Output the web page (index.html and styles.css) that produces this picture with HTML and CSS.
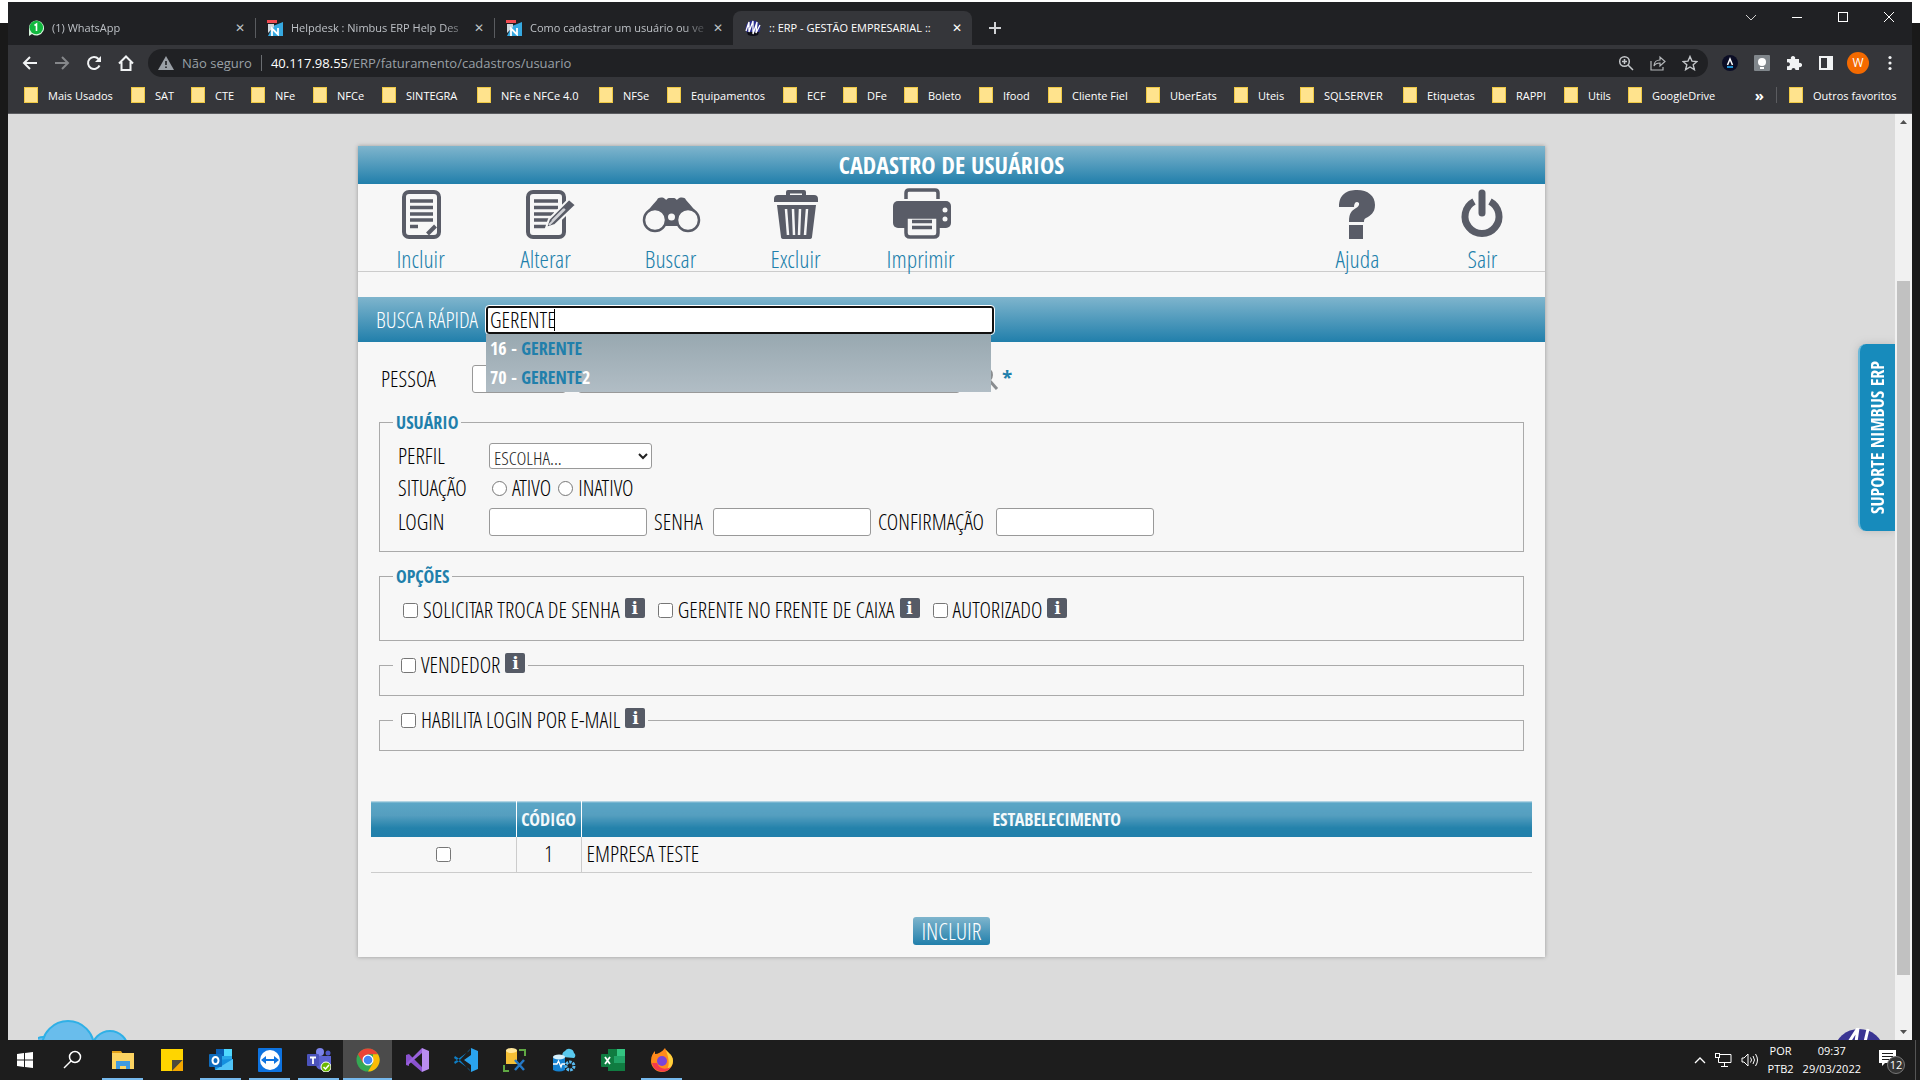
FILE: index.html
```html
<!DOCTYPE html>
<html lang="pt-BR">
<head>
<meta charset="utf-8">
<title>:: ERP - GESTÃO EMPRESARIAL ::</title>
<link rel="stylesheet" href="styles.css">
</head>
<body>
<div class="desktop">
<div class="window">
  <header class="tabbar">
    <div class="tab tab-first">
      <svg class="favicon" width="16" height="16" viewBox="0 0 16 16"><path d="M1 16V8a7.500 7.500 0 1 1 3 6z" fill="#d8f5de"/><circle cx="8.300" cy="7.500" r="6.800" fill="#12b83f"/><path d="M6.500 5.500l2-1.500v7" fill="none" stroke="#fff" stroke-width="1.600"/></svg>
      <span class="tab-title">(1) WhatsApp</span><button class="tab-close" aria-label="Fechar">✕</button>
    </div>
    <div class="tab">
      <svg class="favicon" width="16" height="16" viewBox="0 0 16 16"><path d="M1 16L6 6l10-4v14z" fill="#36a9e1"/><rect x="0" y="0" width="10" height="3" fill="#f04a50"/><path d="M1 4h6v3L1 13z" fill="#cfd8dd"/><path d="M5 16V8.500l6 6V8" fill="none" stroke="#fff" stroke-width="1.800"/></svg>
      <span class="tab-title">Helpdesk : Nimbus ERP Help Des</span><button class="tab-close" aria-label="Fechar">✕</button>
    </div>
    <div class="tab">
      <svg class="favicon" width="16" height="16" viewBox="0 0 16 16"><path d="M1 16L6 6l10-4v14z" fill="#36a9e1"/><rect x="0" y="0" width="10" height="3" fill="#f04a50"/><path d="M1 4h6v3L1 13z" fill="#cfd8dd"/><path d="M5 16V8.500l6 6V8" fill="none" stroke="#fff" stroke-width="1.800"/></svg>
      <span class="tab-title">Como cadastrar um usuário ou ve</span><button class="tab-close" aria-label="Fechar">✕</button>
    </div>
    <div class="tab tab-active">
      <svg class="favicon" width="16" height="16" viewBox="0 0 16 16"><circle cx="8" cy="8" r="7.500" fill="#2d2f8e"/><path d="M3 15q5 2 10 0l1-3H2z" fill="#0c0c16"/><path d="M1 11L4 2v10l4-11v13l4-12-1 11 4-8" fill="none" stroke="#fff" stroke-width="1.300"/></svg>
      <span class="tab-title">:: ERP - GESTÃO EMPRESARIAL ::</span><button class="tab-close" aria-label="Fechar">✕</button>
    </div>
    <button class="new-tab" aria-label="Nova guia"><svg width="14" height="14" viewBox="0 0 14 14"><path d="M7 1v12M1 7h12" stroke="#d0d2d5" stroke-width="2"/></svg></button>
    <div class="win-controls">
      <svg width="12" height="12" viewBox="0 0 12 12"><path d="M1 4l5 5 5-5" fill="none" stroke="#d0d0d0"/></svg>
      <svg width="12" height="12" viewBox="0 0 12 12"><path d="M1 6.500h10" stroke="#fff"/></svg>
      <svg width="12" height="12" viewBox="0 0 12 12"><rect x="1.500" y="1.500" width="9" height="9" fill="none" stroke="#fff"/></svg>
      <svg width="12" height="12" viewBox="0 0 12 12"><path d="M1 1l10 10M11 1L1 11" stroke="#fff"/></svg>
    </div>
  </header>

  <div class="navbar">
    <div class="nav-buttons">
      <svg width="16" height="16" viewBox="0 0 16 16"><path d="M15 8H2M8 2L2 8l6 6" fill="none" stroke="#f1f3f4" stroke-width="2"/></svg>
      <svg width="16" height="16" viewBox="0 0 16 16"><path d="M1 8h13M8 2l6 6-6 6" fill="none" stroke="#85878a" stroke-width="2"/></svg>
      <svg width="16" height="16" viewBox="0 0 16 16"><path d="M13.500 10.500A6 6 0 1 1 12.500 4" fill="none" stroke="#f1f3f4" stroke-width="2"/><path d="M15 1v6H9z" fill="#f1f3f4"/></svg>
      <svg width="16" height="16" viewBox="0 0 16 16"><path d="M1 8.500L8 1.500l7 7M3.500 7v8h9V7" fill="none" stroke="#f1f3f4" stroke-width="2"/></svg>
    </div>
    <div class="omnibox">
      <svg width="16" height="14" viewBox="0 0 16 14"><path d="M8 0l8 14H0z" fill="#9aa0a6"/><path d="M8 5v4M8 10.500v1.500" stroke="#202124" stroke-width="1.600"/></svg>
      <span class="insecure">Não seguro</span>
      <span class="url"><b>40.117.98.55</b>/ERP/faturamento/cadastros/usuario</span>
      <span class="omni-icons">
        <svg width="16" height="16" viewBox="0 0 16 16"><circle cx="6.500" cy="6.500" r="4.800" fill="none" stroke="#c4c7ca" stroke-width="1.500"/><path d="M10 10l5 5M4 6.500h5M6.500 4v5" stroke="#c4c7ca" stroke-width="1.500"/></svg>
        <svg width="16" height="16" viewBox="0 0 16 16"><path d="M1 6v9h12v-3M4 11c0-4 3-6 6-6V2l5 4.500L10 11V8C7 8 5 9 4 11z" fill="none" stroke="#b4b7ba" stroke-width="1.200"/></svg>
        <svg width="16" height="16" viewBox="0 0 16 16"><path d="M8 1.500l2 4.600 5 .4-3.800 3.300 1.200 4.900L8 12l-4.400 2.700 1.200-4.900L1 6.500l5-.4z" fill="none" stroke="#c4c7ca" stroke-width="1.400"/></svg>
      </span>
    </div>
    <div class="extensions">
      <svg width="16" height="16" viewBox="0 0 16 16"><circle cx="8" cy="8" r="8" fill="#0b0d25"/><path d="M5.500 10L8 4l2.500 6" fill="none" stroke="#fff" stroke-width="1.500"/><path d="M5 12h6" stroke="#1f8fd0" stroke-width="2"/></svg>
      <svg width="16" height="16" viewBox="0 0 16 16"><rect width="16" height="16" rx="1" fill="#80868b"/><circle cx="8" cy="7" r="4" fill="#fff"/><rect x="6" y="12" width="4" height="2" fill="#fff"/></svg>
      <svg width="16" height="16" viewBox="0 0 16 16"><path d="M1 4h4a2.200 2.200 0 1 1 4 0h4v4a2.200 2.200 0 1 1 0 4v3H9.500a2 2 0 1 0-4 0H1v-4a2 2 0 1 0 0-3.500z" fill="#f1f3f4"/></svg>
      <svg width="16" height="16" viewBox="0 0 16 16"><rect x="2" y="2" width="12" height="12" fill="none" stroke="#f1f3f4" stroke-width="2"/><path d="M9 2h5v12H9z" fill="#f1f3f4"/></svg>
      <span class="avatar">W</span>
      <svg width="16" height="16" viewBox="0 0 16 16"><circle cx="8" cy="2.500" r="1.600" fill="#f1f3f4"/><circle cx="8" cy="8" r="1.600" fill="#f1f3f4"/><circle cx="8" cy="13.500" r="1.600" fill="#f1f3f4"/></svg>
    </div>
  </div>

  <nav class="bookmarks">
    <a href="#">Mais Usados</a><a href="#">SAT</a><a href="#">CTE</a><a href="#">NFe</a><a href="#">NFCe</a><a href="#">SINTEGRA</a><a href="#">NFe e NFCe 4.0</a><a href="#">NFSe</a><a href="#">Equipamentos</a><a href="#">ECF</a><a href="#">DFe</a><a href="#">Boleto</a><a href="#">Ifood</a><a href="#">Cliente Fiel</a><a href="#">UberEats</a><a href="#">Uteis</a><a href="#">SQLSERVER</a><a href="#">Etiquetas</a><a href="#">RAPPI</a><a href="#">Utils</a><a href="#">GoogleDrive</a><span class="more">»</span><a class="others" href="#">Outros favoritos</a>
  </nav>

  <div class="viewport">
    <main class="page">
      <section class="card">
        <h1 class="card-title">CADASTRO DE USUÁRIOS</h1>
        <div class="actions">
          <button class="action">
            <svg width="60" height="60" viewBox="0 0 60 60"><rect x="13" y="8" width="35" height="45" rx="5" fill="none" stroke="#595c67" stroke-width="4"/><path d="M19 17h23M19 23.500h23M19 30h23M19 36h23M19 42.500h8" stroke="#595c67" stroke-width="3.400"/><path d="M36.500 50l8-8" stroke="#595c67" stroke-width="4"/></svg>Incluir
          </button>
          <button class="action">
            <svg width="60" height="60" viewBox="0 0 60 60"><rect x="12" y="8" width="36" height="45" rx="5" fill="none" stroke="#595c67" stroke-width="4"/><path d="M18 17h24M18 23.500h24M18 30h20M18 36h16M18 42.500h12" stroke="#595c67" stroke-width="3.400"/><path d="M30 44l3-9 20-20 7 6-21 20z" fill="#595c67" stroke="#f7f7f7" stroke-width="2"/><path d="M33 41l16-16M36 37l12-12" stroke="#d0d1d6" stroke-width="2"/></svg>Alterar
          </button>
          <button class="action">
            <svg width="60" height="60" viewBox="0 0 60 60"><path d="M3 33c3-7 10-13 13-17 1-3 6-3 8-1 2 2 2-1 4-1h5c2 0 2 3 4 1 2-2 7-2 8 1 3 4 10 10 13 17L44 42H18z" fill="#595c67"/><circle cx="14" cy="36" r="11" fill="#f7f7f7" stroke="#595c67" stroke-width="2.500"/><circle cx="47" cy="36" r="11" fill="#f7f7f7" stroke="#595c67" stroke-width="2.500"/><path d="M25 42h11l-1 4h-9z" fill="#f7f7f7"/><circle cx="30.500" cy="33" r="3.500" fill="#f7f7f7"/></svg>Buscar
          </button>
          <button class="action">
            <svg width="60" height="60" viewBox="0 0 60 60"><path d="M8 18v-3q0-4 4-4h8V8q0-2 2-2h16q2 0 2 2v3h8q4 0 4 4v3zM24 11h12V9.500H24z" fill="#595c67" fill-rule="evenodd"/><path d="M11 21h39l-4 32q0 2-3 2H18q-3 0-3-2z" fill="#595c67"/><path d="M20 25l2 26M27 25l1 26M34 25l-1 26M41 25l-2 26" stroke="#f7f7f7" stroke-width="2.500"/></svg>Excluir
          </button>
          <button class="action">
            <svg width="60" height="60" viewBox="0 0 60 60"><path d="M15 15V9q0-3 3-3h26q3 0 3 3v6" fill="none" stroke="#595c67" stroke-width="3.500"/><rect x="2" y="17" width="58" height="27" rx="5" fill="#595c67"/><path d="M15 33h32v16q0 4-4 4H19q-4 0-4-4z" fill="#f7f7f7" stroke="#595c67" stroke-width="3.500"/><path d="M21 37.500h20M21 43.500h20" stroke="#595c67" stroke-width="3.500"/><circle cx="54" cy="26" r="2.500" fill="#f7f7f7"/><circle cx="54" cy="35" r="2.500" fill="#f7f7f7"/></svg>Imprimir
          </button>
          <button class="action action-right">
            <svg width="60" height="60" viewBox="0 0 60 60"><path d="M12 23C12 10 20 6 30 6c11 0 18 6 18 15 0 8-5 11-9 13-2 1-2 2-2 4H22c0-10 3-11 7-14 4-2 4-6 1-6-2 0-3 2-3 5z" fill="#595c67"/><rect x="22" y="41" width="14" height="14" fill="#595c67"/></svg>Ajuda
          </button>
          <button class="action">
            <svg width="60" height="60" viewBox="0 0 60 60"><path d="M22 17.500A17 17 0 1 0 38 17.500" fill="none" stroke="#595c67" stroke-width="7"/><path d="M30 9v20" stroke="#595c67" stroke-width="7" stroke-linecap="round"/></svg>Sair
          </button>
        </div>

        <div class="quick">
          <label for="busca">BUSCA RÁPIDA</label>
          <div class="quick-field">
            <input id="busca" type="text" value="GERENTE">
            <span class="caret"></span>
            <ul class="suggest">
              <li>16 - <b>GERENTE</b></li>
              <li>70 - <b>GERENTE</b>2</li>
            </ul>
          </div>
        </div>

        <div class="person">
          <label for="pessoa">PESSOA</label>
          <input id="pessoa" class="person-code" type="text">
          <input class="person-name" type="text" aria-label="Nome">
          <svg width="28" height="28" viewBox="0 0 28 28"><circle cx="12" cy="10" r="8" fill="none" stroke="#8a8d90" stroke-width="2"/><path d="M17 15l8 9" stroke="#8a8d90" stroke-width="3"/></svg>
          <span class="required">*</span>
        </div>

        <fieldset>
          <legend class="strong">USUÁRIO</legend>
          <div class="row">
            <label class="first" for="perfil">PERFIL</label>
            <select id="perfil"><option>ESCOLHA...</option></select>
          </div>
          <div class="row row-tall">
            <span class="first">SITUAÇÃO</span>
            <input class="radio" type="radio" name="situacao" id="ativo"><label for="ativo">ATIVO</label>
            <input class="radio" type="radio" name="situacao" id="inativo"><label for="inativo">INATIVO</label>
          </div>
          <div class="row row-tall">
            <label class="first" for="login">LOGIN</label><input class="text" id="login" type="text">
            <label class="senha" for="senha">SENHA</label><input class="text" id="senha" type="password">
            <label class="confirm" for="conf">CONFIRMAÇÃO</label><input class="text" id="conf" type="password">
          </div>
        </fieldset>

        <fieldset>
          <legend class="strong">OPÇÕES</legend>
          <div class="row options">
            <span class="check"><input type="checkbox" id="troca"><label for="troca">SOLICITAR TROCA DE SENHA</label><span class="info">i</span></span>
            <span class="check"><input type="checkbox" id="frente"><label for="frente">GERENTE NO FRENTE DE CAIXA</label><span class="info">i</span></span>
            <span class="check"><input type="checkbox" id="aut"><label for="aut">AUTORIZADO</label><span class="info">i</span></span>
          </div>
        </fieldset>

        <fieldset class="short">
          <legend><span class="check"><input type="checkbox" id="vend"><label for="vend">VENDEDOR</label><span class="info">i</span></span></legend>
        </fieldset>

        <fieldset class="short">
          <legend><span class="check"><input type="checkbox" id="mail"><label for="mail">HABILITA LOGIN POR E-MAIL</label><span class="info">i</span></span></legend>
        </fieldset>

        <table class="companies">
          <thead><tr><th class="col-check"></th><th class="col-code">CÓDIGO</th><th>ESTABELECIMENTO</th></tr></thead>
          <tbody><tr><td class="center"><input type="checkbox" aria-label="EMPRESA TESTE"></td><td class="center">1</td><td>EMPRESA TESTE</td></tr></tbody>
        </table>

        <button class="submit">INCLUIR</button>
      </section>

      <a class="support" href="#">SUPORTE NIMBUS ERP</a>
      <svg class="cloud" width="100" height="20" viewBox="0 0 100 20"><g fill="#69bdec" stroke="#2fb0e6" stroke-width="2"><circle cx="5" cy="30" r="13"/><circle cx="72" cy="29" r="18"/><circle cx="30" cy="27" r="26"/></g></svg>
      <svg class="brand" width="44" height="12" viewBox="0 0 44 12"><ellipse cx="22" cy="22" rx="24" ry="21" fill="#3a3593"/><path d="M12 14L21 0l-2 14M28 14L31 1" fill="none" stroke="#fff" stroke-width="3"/></svg>
    </main>
    <div class="scrollbar">
      <svg width="17" height="17" viewBox="0 0 17 17"><path d="M5 10l3.500-4 3.500 4z" fill="#505050"/></svg>
      <span class="thumb"></span>
      <svg width="17" height="17" viewBox="0 0 17 17"><path d="M5 7l3.500 4L12 7z" fill="#505050"/></svg>
    </div>
  </div>
</div>
</div>

<footer class="taskbar">
  <span class="app"><svg width="24" height="24" viewBox="0 0 24 24"><path d="M4 6l7-1v6.500H4zM12 5l8-1v7.500h-8zM4 12.500h7V19l-7-1zM12 12.500h8V20l-8-1z" fill="#fff"/></svg></span>
  <span class="app"><svg width="24" height="24" viewBox="0 0 24 24"><circle cx="13" cy="9" r="5.500" fill="none" stroke="#fff" stroke-width="1.500"/><path d="M9 13l-7 7" stroke="#fff" stroke-width="1.500"/></svg></span>
  <span class="app open"><svg width="24" height="24" viewBox="0 0 24 24"><path d="M1 3h9l2 3H1z" fill="#e3a21a"/><path d="M1 5h22v16H1z" fill="#fcd462"/><path d="M5 21v-8h14v8h-4v-3H9v3z" fill="#3f9be0"/></svg></span>
  <span class="app"><svg width="24" height="24" viewBox="0 0 24 24"><path d="M1 1h22v12L12 23H1z" fill="#ffd500"/><path d="M12 23V12h11z" fill="#4d4a3c"/><path d="M12 23l11-11v11z" fill="#f5a800"/></svg></span>
  <span class="app open"><svg width="24" height="24" viewBox="0 0 24 24"><path d="M7 1h16v13H7z" fill="#28a8ea"/><path d="M7 1h8v7H7z" fill="#0a5fb4"/><path d="M15 1h8v7h-8z" fill="#50d9ff"/><path d="M5 12l19-1v11H6z" fill="#1490df"/><path d="M6 22l18-11v11z" fill="#50c4f7"/><rect y="6" width="13" height="13" rx="1" fill="#0f6cbd"/><ellipse cx="6.500" cy="12.500" rx="3" ry="3.500" fill="none" stroke="#fff" stroke-width="2"/></svg></span>
  <span class="app open"><svg width="24" height="24" viewBox="0 0 24 24"><rect width="24" height="24" rx="1" fill="#0e73e0"/><circle cx="12" cy="12" r="10" fill="#fff"/><path d="M3 12l5-4v3h8V8l5 4-5 4v-3H8v3z" fill="#0e73e0"/></svg></span>
  <span class="app open"><svg width="24" height="24" viewBox="0 0 24 24"><circle cx="13" cy="4" r="4" fill="#7b83eb"/><circle cx="21" cy="5" r="2.500" fill="#5059c9"/><path d="M9 8h15v8a5 5 0 0 1-6 5c-6 2-9-1-9-5z" fill="#5b63d3"/><rect y="6" width="12" height="12" rx="1" fill="#4b53bc"/><path d="M3 9.500h6M6 9.500V16" stroke="#fff" stroke-width="1.800"/><circle cx="19" cy="19" r="5" fill="#6bb700" stroke="#fff"/><path d="M16.500 19l2 2 3.500-4" fill="none" stroke="#fff" stroke-width="1.500"/></svg></span>
  <span class="app open current"><svg width="24" height="24" viewBox="0 0 24 24"><circle cx="12" cy="12" r="11.500" fill="#35a853"/><path d="M2 6.200A11.500 11.500 0 0 1 22 6.200H12L7 15z" fill="#ea4335"/><path d="M22 6.200A11.500 11.500 0 0 1 12 23.500L17 15V6.200z" fill="#fbbc05"/><circle cx="12" cy="12" r="5.500" fill="#fff"/><circle cx="12" cy="12" r="4.300" fill="#4285f4"/></svg></span>
  <span class="app"><svg width="24" height="24" viewBox="0 0 24 24"><path d="M1 7l3-1 13 13v5L3 12l-2 3zM1 17V7l3-1v12z" fill="#8a52cf"/><path d="M3 17l14-12V0L1 16z" fill="#9a62dc"/><path d="M17 0l7 3v18l-7 3z" fill="#b98cf0"/></svg></span>
  <span class="app"><svg width="24" height="24" viewBox="0 0 24 24"><path d="M17 0L4 14 1 16l-1-2L15 3zM17 24L4 10 1 8l-1 2 15 11z" fill="#0e7dc4"/><path d="M17 0l7 3v18l-7 3V17l-7-5 7-5z" fill="#2aa3ee"/></svg></span>
  <span class="app"><svg width="24" height="24" viewBox="0 0 24 24"><path d="M3 2h11v14H3z" fill="#f5bf35"/><ellipse cx="8.500" cy="2.500" rx="5.500" ry="2.500" fill="#ffe69a"/><path d="M16 2h6v6M1 17v6h5" fill="none" stroke="#5fa843" stroke-width="2"/><path d="M12 12l9 10M21 12l-9 10" stroke="#2579c7" stroke-width="2.500"/></svg></span>
  <span class="app"><svg width="24" height="24" viewBox="0 0 24 24"><path d="M11 9a4 4 0 0 1 2-6 5 5 0 0 1 9 2 3 3 0 0 1 0 5z" fill="#59c9ee"/><path d="M1 9h12v13q-6 3-12 0z" fill="#1482d2"/><ellipse cx="7" cy="9" rx="6" ry="2.500" fill="#d7f1fc"/><path d="M1 16h4l1.500-3L9 19l1-3h3" fill="none" stroke="#fff" stroke-width="1.300"/><circle cx="18" cy="18" r="4" fill="none" stroke="#59b9ee" stroke-width="3" stroke-dasharray="2.500 1"/></svg></span>
  <span class="app"><svg width="24" height="24" viewBox="0 0 24 24"><path d="M7 1h17v22H7z" fill="#21a366"/><path d="M7 1h9v7H7zM7 15h17v8H7z" fill="#107c41"/><path d="M16 1h8v7h-8z" fill="#33c481"/><rect y="6" width="13" height="13" rx="1" fill="#107c41"/><path d="M4 9l5 7M9 9l-5 7" stroke="#fff" stroke-width="1.800"/></svg></span>
  <span class="app open"><svg width="24" height="24" viewBox="0 0 24 24"><path d="M15 0c1 4 8 6 8 13a11 11 0 0 1-22 0c0-5 2-8 4-10v3c3 0 7-2 10-6z" fill="#ff8a1c"/><path d="M15 0c1 4 8 6 8 13a11 11 0 0 1-6 9c3-6 2-12-2-22z" fill="#ffd23c"/><path d="M2 15a10.500 10.500 0 0 0 19 4c-6 3-12 2-14-4z" fill="#f43a4e"/><circle cx="12" cy="13" r="5" fill="#7a45d8"/></svg></span>
  <div class="tray">
    <svg width="12" height="8" viewBox="0 0 12 8"><path d="M1 7l5-5 5 5" fill="none" stroke="#fff" stroke-width="1.300"/></svg>
    <svg width="17" height="14" viewBox="0 0 17 14"><path d="M4 1.500h12v8H3.500V5M9.500 9.500v4M6 13.500h7" fill="none" stroke="#fff"/><rect x=".5" y=".5" width="4" height="4" fill="#1d1d1d" stroke="#fff"/></svg>
    <svg width="18" height="14" viewBox="0 0 18 14"><path d="M1 5h2l4-4v12L3 9H1zM9.500 4.500q2 2.500 0 5M12 3q3 4 0 8M14.500 1q4 6 0 12" fill="none" stroke="#fff"/></svg>
    <span class="tray-text">POR<br>PTB2</span>
    <span class="tray-text clock">09:37<br>29/03/2022</span>
    <span class="notes"><svg width="17" height="16" viewBox="0 0 17 16"><path d="M0 0h17v13H6l-3 3v-3H0z" fill="#fff"/><path d="M3 3.500h11M3 6.500h11M3 9.500h7" stroke="#1d1d1d"/></svg><span class="count">12</span></span>
  </div>
</footer>
</body>
</html>
```
FILE: styles.css
```css
* { box-sizing: border-box; }
html, body { height: 100%; }
body {
  margin: 0;
  display: flex;
  flex-direction: column;
  overflow: hidden;
  background: #1d1d1d;
  font: 11px "Open Sans", sans-serif;
}
svg { display: block; flex: none; }
button { border: 0; background: none; padding: 0; font: inherit; color: inherit; }
a { color: inherit; text-decoration: none; }

.desktop {
  flex: 1;
  min-height: 0;
  display: flex;
  padding: 2px 8px 0;
  background: linear-gradient(#fff 23px, #191919 23px);
}
.window { flex: 1; min-width: 0; display: flex; flex-direction: column; color: #fff; }

/* browser chrome */
.tabbar { height: 43px; display: flex; align-items: flex-end; background: #202124; padding-left: 8px; }
.tab {
  width: 239px;
  height: 34px;
  display: flex;
  align-items: center;
  padding: 0 7px 1px 12px;
  color: #bdc1c6;
}
.tab-title {
  flex: 1;
  min-width: 0;
  margin-left: 8px;
  white-space: nowrap;
  mask-image: linear-gradient(90deg, #000 85%, transparent);
}
.tab + .tab:not(.tab-active) { background: linear-gradient(#5a5c60, #5a5c60) 0 7px / 1px 20px no-repeat; }
.tab-active { background: #35363a; border-radius: 8px 8px 0 0; color: #fff; }
.tab-active .tab-title { mask-image: none; }
.tab-close { width: 16px; font-size: 12px; }
.new-tab { height: 34px; padding: 0 16px; }
.win-controls { margin-left: auto; align-self: flex-start; display: flex; gap: 34px; padding: 9px 17px 0 0; }

.navbar { height: 33px; display: flex; align-items: center; background: #35363a; padding-top: 2px; }
.nav-buttons { display: flex; gap: 16px; padding: 0 14px; }
.omnibox {
  flex: 1;
  height: 28px;
  border-radius: 14px;
  background: #202124;
  display: flex;
  align-items: center;
  padding: 0 10px;
  font-size: 13px;
  color: #9aa0a6;
}
.insecure { margin-left: 8px; padding-right: 9px; border-right: 1px solid #6a6d71; line-height: 16px; }
.url { margin-left: 9px; }
.url b { font-weight: 400; color: #fff; }
.omni-icons { margin-left: auto; display: flex; gap: 16px; }
.extensions { display: flex; align-items: center; gap: 16px; padding: 0 14px; }
.avatar { width: 22px; height: 22px; margin: 0 -3px; border-radius: 50%; background: #f46a00; text-align: center; font-size: 12px; line-height: 22px; }

.bookmarks {
  height: 36px;
  display: grid;
  grid-template-columns: 107px 60px 60px 62px 69px 95px 122px 68px 116px 60px 61px 75px 69px 98px 88px 66px 103px 89px 72px 64px 1fr auto 135px;
  align-items: center;
  padding: 0 0 1px 16px;
  background: #35363a;
  border-bottom: 1px solid #5b5c60;
  white-space: nowrap;
}
.bookmarks a::before {
  content: "";
  display: inline-block;
  width: 12px;
  height: 14px;
  margin-right: 10px;
  vertical-align: -3px;
  background: #ffe38d;
  border: 1px solid #efc944;
}
.more { padding-right: 12px; font-size: 15px; font-weight: 700; line-height: 16px; border-right: 1px solid #5b5c60; }
.bookmarks .others { padding-left: 12px; }

/* ERP page */
.viewport { flex: 1; min-height: 0; display: flex; }
.page {
  flex: 1;
  position: relative;
  overflow: hidden;
  padding-top: 32px;
  background: #dbdbdb;
  color: #000;
  font: 22px/28px "Open Sans Condensed Light", "Roboto Condensed", sans-serif;
}
.card {
  width: 62.9%;
  margin: 0 auto;
  padding-bottom: 12px;
  background: #f7f7f7;
  box-shadow: 0 0 4px #999;
}
.card-title {
  margin: 0;
  background: linear-gradient(#7fb5cd, #217fab);
  color: #fff;
  text-align: center;
  font: 700 24px/38px "Open Sans Condensed", sans-serif;
}
.actions { display: flex; height: 88px; border-bottom: 1px solid #ccc; }
.action {
  width: 125px;
  display: flex;
  flex-direction: column;
  align-items: center;
  justify-content: flex-start;
  color: #217fab;
  font-size: 24px;
  line-height: 30px;
}
.action-right { margin-left: auto; }

.quick {
  height: 45px;
  margin-top: 25px;
  display: flex;
  align-items: center;
  padding-left: 18px;
  background: linear-gradient(#7fb5cd, #217fab);
  color: #fff;
}
.quick label { width: 110px; }
label, .first { padding-bottom: 2px; }
.quick-field { position: relative; width: 508px; }
.page input[type="text"], .page input[type="password"] {
  height: 28px;
  border: 1px solid #999;
  border-radius: 3px;
  background: #fff;
  font: inherit;
}
.page .quick-field input[type="text"] {
  display: block;
  width: 100%;
  padding: 0 2px 2px;
  border: 2px solid #101010;
  outline: 1px solid #fff;
}
.caret { position: absolute; left: 68px; top: 3px; width: 1px; height: 22px; background: #000; }
.suggest {
  position: absolute;
  z-index: 1;
  left: 0;
  top: 28px;
  width: 505px;
  margin: 0;
  padding: 0 4px;
  list-style: none;
  background: linear-gradient(#98a8b0, #b1bdc5);
  font: 700 18px/28px "Open Sans Condensed", sans-serif;
}
.suggest li { height: 29px; }
.suggest b { color: #217fab; }

.person { display: flex; align-items: center; padding-left: 23px; margin: 22px 0 14px; }
.person label { width: 91px; }
.person-code { width: 94px; }
.person-name { width: 382px; margin: 0 12px; }
.required { color: #217fab; font-family: "Open Sans Condensed", sans-serif; font-weight: 700; margin: -4px 0 0 2px; }

fieldset { margin: 0 21px 10px; padding: 0 13px 12px; border: 1px solid #aaa; min-width: 0; }
legend { height: 28px; padding: 0 3px 0 8px; }
legend.strong { padding: 0 3px; color: #217fab; font: 700 18px/28px "Open Sans Condensed", sans-serif; }
.row { display: flex; align-items: center; height: 30px; margin-top: 5px; padding-left: 5px; }
.row-tall { height: 34px; margin-top: 0; }
.first { width: 91px; }
.page select {
  width: 163px;
  height: 26px;
  padding-bottom: 2px;
  border: 1px solid #999;
  border-radius: 3px;
  background: #fff;
  color: #222;
  font: inherit;
  font-size: 19px;
  line-height: 22px;
}
input[type="checkbox"] { width: 15px; height: 15px; margin: 0 5px 0 0; }
.radio { width: 15px; height: 15px; margin: 0 5px 0 3px; }
.radio + label { margin-right: 4px; }
.row .text { width: 158px; }
.senha { margin-left: 7px; width: 59px; }
.confirm { margin-left: 7px; width: 118px; }
.check { display: flex; align-items: center; height: 28px; }
.options { gap: 13px; height: 33px; padding: 0 0 3px 10px; }
.info {
  width: 20px;
  height: 20px;
  margin: -4px 0 0 5px;
  border-radius: 2px;
  background: #565b66;
  color: #fff;
  text-align: center;
  font: 700 17px/20px "DejaVu Serif", serif;
}
.short { padding-bottom: 16px; }

.companies { width: calc(100% - 26px); margin: 50px 13px 44px; border-collapse: collapse; table-layout: fixed; }
.companies th {
  height: 36px;
  padding: 0;
  border-left: 1px solid #fff;
  background: linear-gradient(#cfe3ec 0, #5ba6c6 2px, #559ebf 40%, #2482ab 75%, #217fab);
  color: #f4f9fb;
  font: 700 18px/28px "Open Sans Condensed", sans-serif;
}
.companies td { height: 35px; padding: 0 5px 2px; border-left: 1px solid #ccc; border-bottom: 1px solid #ccc; }
.companies th:first-child, .companies td:first-child { border-left: 0; }
.col-check { width: 145px; }
.col-code { width: 65px; }
.companies .center { text-align: center; }
.companies input { margin: 0; }
.submit {
  display: block;
  height: 28px;
  margin: 0 auto;
  padding: 0 8px;
  border-radius: 3px;
  background: linear-gradient(#7fb5cd, #217fab);
  color: #fff;
  font-size: 23px;
  line-height: 28px;
}

.support {
  position: absolute;
  right: 0;
  top: 230px;
  width: 37px;
  height: 187px;
  writing-mode: vertical-rl;
  rotate: 180deg;
  border-radius: 0 8px 8px 0;
  border-right: 2px solid #6db8d8;
  background: #178bbc;
  box-shadow: 0 0 8px #bbb;
  color: #fff;
  text-align: center;
  font: 700 18px/35px "Open Sans Condensed", sans-serif;
}
.cloud { position: absolute; left: 30px; bottom: 0; }
.brand { position: absolute; right: 14px; bottom: 0; }
.scrollbar { width: 17px; display: flex; flex-direction: column; background: #f1f1f1; }
.thumb { flex: 1; margin: 150px 2px 48px; background: #c1c1c1; }

/* taskbar */
.taskbar { height: 40px; display: flex; background: #1d1d1d; color: #fff; }
.app { position: relative; width: 49px; display: flex; align-items: center; justify-content: center; }
.open::after { content: ""; position: absolute; left: 4px; right: 4px; bottom: 0; height: 2px; background: #76b9ed; }
.current { background: #4b4b4b; }
.current::after { left: 0; right: 0; }
.tray { margin-left: auto; display: flex; align-items: center; gap: 9px; padding-right: 10px; border-right: 1px solid #555; margin-right: 4px; }
.tray-text { text-align: center; font-size: 11px; line-height: 18px; }
.notes { position: relative; width: 26px; height: 24px; margin-left: 9px; padding-top: 2px; }
.count {
  position: absolute;
  right: 0;
  top: 8px;
  width: 18px;
  height: 18px;
  border: 1px solid #777;
  border-radius: 50%;
  background: #333;
  text-align: center;
  font-size: 11px;
  line-height: 16px;
}
```
